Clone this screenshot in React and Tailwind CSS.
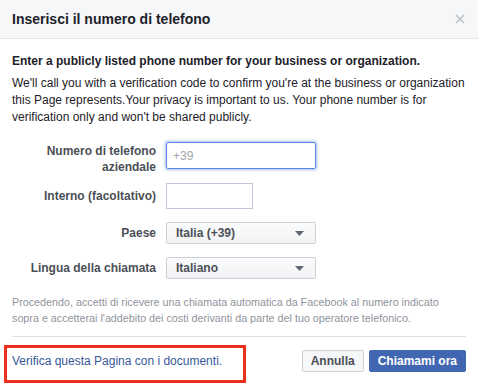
// App.jsx — "Inserisci il numero di telefono" phone verification dialog

function Label({ children, top }) {
  return (
    <div
      className={`w-[144px] shrink-0 text-right text-[12px] font-bold leading-[16px] text-[#4b4f56] ${top ? '-mb-[6px] pt-[1px]' : ''}`}
    >
      {children}
    </div>
  )
}

function Select({ value }) {
  return (
    <div className="flex h-[22px] w-[150px] items-center justify-between rounded-[2px] border border-[#ccd0d5] bg-gradient-to-b from-[#fafbfc] to-[#f2f3f5] pl-[9px] pr-[11px] text-[12px] font-bold text-[#4b4f56]">
      <span>{value}</span>
      <svg width="9" height="5" viewBox="0 0 9 5">
        <path d="M0 0h9L4.5 5z" fill="#606770" />
      </svg>
    </div>
  )
}

export default function App() {
  return (
    <div
      className="relative h-[385px] w-[478px] overflow-hidden bg-white text-[#1d2129]"
      style={{ fontFamily: '"Liberation Sans", Arial, sans-serif' }}
    >
      {/* Header */}
      <header className="flex h-[39px] items-center justify-between border-b border-[#e5e5e5] bg-[#f6f7f9] pl-3 pr-[13px]">
        <h1 className="text-[14px] font-bold text-[#1d2129]">Inserisci il numero di telefono</h1>
        <svg width="10" height="10" viewBox="0 0 10 10">
          <path d="M1 1l8 8M9 1l-8 8" stroke="#bec2c9" strokeWidth="1.6" />
        </svg>
      </header>

      <main className="px-3 pt-[14px]">
        <p className="text-[12px] font-bold leading-[16px]">
          Enter a publicly listed phone number for your business or organization.
        </p>
        <p className="mt-[6px] text-[12px] leading-[17px] text-[#1d2129]">
          We'll call you with a verification code to confirm you're at the business or organization
          this Page represents.Your privacy is important to us. Your phone number is for
          verification only and won't be shared publicly.
        </p>

        {/* Form */}
        <div className="mt-[16px] flex flex-col gap-[14px]">
          <div className="flex items-start gap-[10px]">
            <Label top>Numero di telefono aziendale</Label>
            <div className="flex h-[27px] w-[150px] items-center rounded-[2px] border border-[#5d89e4] pl-[6px] text-[12px] text-[#a0a4ab] shadow-[0_0_3px_1px_rgba(93,137,228,0.55)]">
              +39
            </div>
          </div>
          <div className="flex items-center gap-[10px]">
            <Label>Interno (facoltativo)</Label>
            <div className="h-[26px] w-[87px] border border-[#bdc7d8]" />
          </div>
          <div className="-mt-[1px] flex items-center gap-[10px]">
            <Label>Paese</Label>
            <Select value="Italia (+39)" />
          </div>
          <div className="-mt-[1px] flex items-center gap-[10px]">
            <Label>Lingua della chiamata</Label>
            <Select value="Italiano" />
          </div>
        </div>

        <p className="mt-[15px] pr-[20px] text-[10.75px] leading-[16px] text-[#90949c]">
          Procedendo, accetti di ricevere una chiamata automatica da Facebook al numero indicato
          sopra e accetterai l'addebito dei costi derivanti da parte del tuo operatore telefonico.
        </p>

        {/* Footer */}
        <div className="mt-[10px] flex items-center justify-between border-t border-[#dddfe2] pt-[13px]">
          <a className="text-[12px] text-[#365899]">Verifica questa Pagina con i documenti.</a>
          <div className="flex gap-[5px]">
            <button className="h-[22px] rounded-[2px] border border-[#ced0d4] bg-[#f6f7f9] px-[8px] text-[12px] font-bold text-[#4b4f56]">
              Annulla
            </button>
            <button className="h-[22px] rounded-[2px] border border-[#4267b2] bg-[#4267b2] px-[8px] text-[12px] font-bold text-white">
              Chiamami ora
            </button>
          </div>
        </div>
      </main>

      {/* Red highlight box drawn over the link */}
      <div className="absolute left-[4px] top-[345px] h-[38px] w-[242px] border-[3px] border-[#e8301a]" />
    </div>
  )
}
